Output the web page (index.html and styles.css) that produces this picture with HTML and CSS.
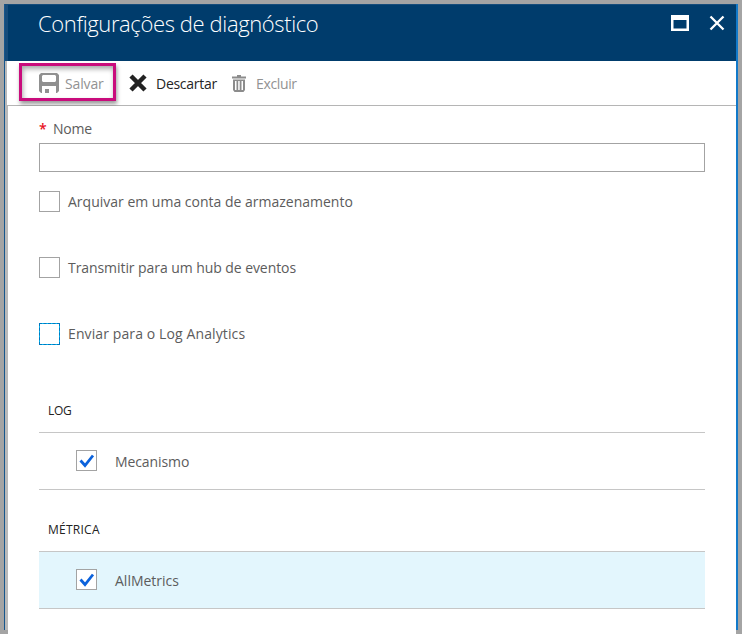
FILE: index.html
```html
<!DOCTYPE html>
<html lang="pt-BR">
<head>
<meta charset="utf-8">
<title>Configurações de diagnóstico</title>
<link rel="stylesheet" href="styles.css">
</head>
<body>
<main class="blade">
  <header class="header">
    <h1 class="title">Configurações de diagnóstico</h1>
    <div class="window-actions">
      <svg width="18" height="16" viewBox="0 0 18 16"><path fill="#fff" fill-rule="evenodd" d="M0 0h18v16H0zM2.500 5v8.500h13V5z"/></svg>
      <svg width="16" height="16" viewBox="0 0 16 16"><path d="M1.500 1.500l13 13M14.500 1.500l-13 13" stroke="#fff" stroke-width="2.300"/></svg>
    </div>
  </header>
  <nav class="toolbar">
    <button class="tool save"><svg width="20" height="20" viewBox="0 0 20 20"><path fill="#909090" fill-rule="evenodd" d="M2 0h16l2 2v16l-2 2h-1v-7H3v7H2l-2-2V2zM4 2L3 3v5l1 1h12l1-1V3l-1-1zM6 16h4v4H6z"/></svg><span class="t-save">Salvar</span></button>
    <button class="tool discard"><svg width="18" height="18" viewBox="0 0 18 18"><path d="M2 2l14 14M16 2L2 16" stroke="#222" stroke-width="4.500"/></svg><span class="t-discard">Descartar</span></button>
    <button class="tool delete"><svg width="14" height="17" viewBox="0 0 14 17"><path fill="#8c8c8c" fill-rule="evenodd" d="M5 0h4v1.500h5v2H0v-2h5zM1 4.500h12V15l-1.500 2h-9L1 15zM3 6v9h1.500V6zM6.200 6v9h1.500V6zM9.500 6v9H11V6z"/></svg><span class="t-delete">Excluir</span></button>
  </nav>
  <form class="form">
    <label class="name-label" for="name"><span class="required">*</span><span class="t-name">Nome</span></label>
    <input class="name-input" id="name" type="text">
    <div class="option"><span class="box"></span><span class="t-archive">Arquivar em uma conta de armazenamento</span></div>
    <div class="option"><span class="box"></span><span class="t-hub">Transmitir para um hub de eventos</span></div>
    <div class="option"><span class="box focused"></span><span class="t-analytics">Enviar para o Log Analytics</span></div>
    <section class="group">
      <h2 class="group-title t-log">LOG</h2>
      <div class="row"><span class="box"><svg width="19" height="19" viewBox="0 0 19 19"><path d="M3.500 9.500l4.500 5 8-10" fill="none" stroke="#0b62dc" stroke-width="2.800"/></svg></span><span class="row-text t-engine">Mecanismo</span></div>
    </section>
    <section class="group">
      <h2 class="group-title t-metric">MÉTRICA</h2>
      <div class="row selected"><span class="box"><svg width="19" height="19" viewBox="0 0 19 19"><path d="M3.500 9.500l4.500 5 8-10" fill="none" stroke="#0b62dc" stroke-width="2.800"/></svg></span><span class="row-text">AllMetrics</span></div>
    </section>
  </form>
</main>
</body>
</html>
```
FILE: styles.css
```css
* { box-sizing: border-box; }
body {
  margin: 0;
  height: 634px;
  padding: 4px;
  overflow: hidden;
  background: #a4a4a4;
  font: 14px/20px "Open Sans", "Noto Sans", sans-serif;
  color: #5c5c5c;
}
.blade {
  height: 626px;
  border-left: 1px solid #15558c;
  border-right: 2px solid #1279c9;
  background: #b9b9b9;
  display: flex;
  flex-direction: column;
}
.header {
  height: 57px;
  flex: none;
  display: flex;
  justify-content: space-between;
  padding: 0 11px 0 30px;
  border-left: 3px solid #164c7b;
  border-top: 1px solid #164c7b;
  background: #003c6c;
}
.title {
  margin: 3px 0 0;
  color: #fff;
  font-size: 22px;
  line-height: 30px;
  font-weight: 300;
  letter-spacing: -0.380px;
  white-space: nowrap;
}
.window-actions { display: flex; gap: 20px; padding-top: 10px; }
.toolbar {
  height: 45px;
  flex: none;
  margin-left: 2px;
  padding: 2px 0 0 12px;
  border-bottom: 1px solid #b5b5b5;
  background: #fff;
  display: flex;
  align-items: flex-start;
}
.tool {
  height: 38px;
  padding: 2px 0 0;
  border: 0;
  background: transparent;
  font: inherit;
  color: #929292;
  display: flex;
  align-items: center;
  white-space: nowrap;
}
.tool span { padding-top: 2px; }
.save {
  width: 97px;
  padding-left: 17px;
  gap: 6px;
  border: 3px solid #c90c7c;
  box-shadow: 1px 3px 4px #0006, inset 1px 3px 5px #0005;
}
.discard { margin-left: 13px; width: 103px; gap: 9px; color: #252525; }
.delete { gap: 10px; }
.t-save { letter-spacing: -0.150px; }
.t-discard { letter-spacing: -0.280px; }
.t-delete { letter-spacing: -0.350px; }
.form {
  flex: 1;
  margin-left: 3px;
  padding: 13px 31px 0;
  background: #fff;
}
.name-label { display: flex; height: 24px; line-height: 20px; }
.required { width: 14px; color: #e81123; font-weight: 600; }
.t-name { letter-spacing: -0.200px; }
.name-input {
  display: block;
  width: 666px;
  height: 29px;
  margin-bottom: 19px;
  border: 1px solid #a3a3a3;
  background: #fff;
}
.option { display: flex; align-items: center; gap: 8px; height: 21px; margin-bottom: 45px; white-space: nowrap; }
.t-hub { letter-spacing: -0.070px; }
.t-analytics { letter-spacing: 0.110px; }
.box { width: 21px; height: 21px; flex: none; border: 1px solid #a3a3a3; background: #fff; }
.box svg { display: block; }
.focused { height: 22px; border: 1px dashed #0078c0; background: linear-gradient(#fff, #fff) padding-box, #00b7ef border-box; }
.group { height: 119px; }
.group:first-of-type { margin-top: 57px; }
.group-title { height: 31px; margin: 0; padding-left: 9px; color: #222; font-size: 12px; line-height: 20px; font-weight: 400; }
.t-log { letter-spacing: -0.300px; }
.t-metric { letter-spacing: 0.250px; }
.row { height: 58px; display: flex; align-items: center; padding-left: 37px; gap: 18px; border: solid #c6c6c6; border-width: 1px 0; }
.row .box { margin-bottom: 2px; }
.row-text { padding-top: 2px; }
.t-engine { letter-spacing: -0.100px; }
.selected { background: #e3f6fd; }
```
